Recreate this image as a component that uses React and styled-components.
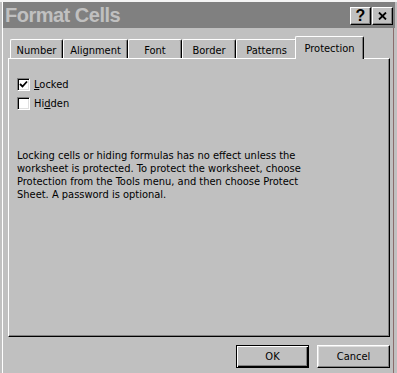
import React from "react";
import styled, { createGlobalStyle } from "styled-components";

const UI = `"DejaVu Sans Condensed", "DejaVu Sans", sans-serif`;

const Global = createGlobalStyle`
  html, body { margin: 0; padding: 0; background: #c0c0c0; }
  body { font-family: ${UI}; font-size: 11px; color: #000; }
  * { box-sizing: border-box; }
`;

const Frame = styled.div`
  width: 397px;
  height: 373px;
  background: #c0c0c0;
  border-top: 2px solid #f4f4f4;
  padding: 0 2px 0 3px;
  box-shadow: inset 2px 0 0 #c0c0c0, inset 3px 0 0 #ffffff,
    inset -3px 0 0 #c0c0c0, inset -4px 0 0 #8c6c6c;
  display: flex;
  flex-direction: column;
  overflow: hidden;
`;

const TitleBar = styled.div`
  height: 26px;
  background: #808080;
  display: flex;
  align-items: center;
  justify-content: space-between;
  padding: 0 2px 0 2px;
`;

const Title = styled.span`
  font-family: "Liberation Sans", Arial, sans-serif;
  font-weight: bold;
  font-size: 20px;
  color: #c0c0c0;
  letter-spacing: -0.5px;
  line-height: 26px;
`;

const Controls = styled.div`
  display: flex;
  gap: 1px;
  margin-top: 1px;
`;

const CtlButton = styled.div`
  width: 21px;
  height: 18px;
  background: #c0c0c0;
  border-top: 1px solid #ffffff;
  border-left: 1px solid #ffffff;
  border-right: 1px solid #000;
  border-bottom: 1px solid #000;
  box-shadow: inset -1px -1px 0 #808080;
  display: flex;
  align-items: center;
  justify-content: center;
  font-family: "Liberation Sans", Arial, sans-serif;
  font-weight: bold;
  font-size: 16px;
  line-height: 1;
  color: #000;
`;

const Body = styled.div`
  padding: 8px 0 0 5px;
  display: flex;
  flex-direction: column;
`;

const TabRow = styled.div`
  display: flex;
  align-items: flex-end;
  height: 22px;
  padding-left: 2px;
  position: relative;
  z-index: 1;
`;

const Tab = styled.div`
  width: ${(p) => p.$w + (p.$active ? 4 : 0)}px;
  height: ${(p) => (p.$active ? 23 : 19)}px;
  margin: ${(p) => (p.$active ? "0 -2px -1px -2px" : "0")};
  background: #c0c0c0;
  border-top: 1px solid #ffffff;
  border-left: 1px solid #ffffff;
  border-right: 1px solid #000;
  border-radius: 2px 2px 0 0;
  box-shadow: inset -1px 0 0 #808080;
  display: flex;
  align-items: center;
  justify-content: center;
  padding-top: ${(p) => (p.$active ? 0 : 2)}px;
  font-size: 11px;
  color: #000;
`;

const Panel = styled.div`
  width: 382px;
  height: 279px;
  border-top: 1px solid #ffffff;
  border-left: 1px solid #ffffff;
  border-right: 1px solid #000;
  border-bottom: 1px solid #000;
  box-shadow: inset -1px -1px 0 #808080;
  padding: 19px 8px 0 8px;
  display: flex;
  flex-direction: column;
`;

const CheckRow = styled.label`
  display: flex;
  align-items: center;
  gap: 4px;
  height: 13px;
  margin-bottom: 6px;
  font-size: 11px;
`;

const Box = styled.span`
  width: 13px;
  height: 13px;
  background: #fff;
  border-top: 1px solid #808080;
  border-left: 1px solid #808080;
  border-right: 1px solid #fff;
  border-bottom: 1px solid #fff;
  box-shadow: inset 1px 1px 0 #000, inset -1px -1px 0 #dfdfdf;
  display: flex;
  align-items: center;
  justify-content: center;
`;

const Note = styled.p`
  margin: 33px 0 0 0;
  font-size: 11px;
  line-height: 13px;
  width: 300px;
`;

const Footer = styled.div`
  display: flex;
  justify-content: flex-end;
  gap: 8px;
  padding: 8px 5px 0 0;
  width: 387px;
`;

const Button = styled.div`
  width: 73px;
  height: 23px;
  background: #c0c0c0;
  display: flex;
  align-items: center;
  justify-content: center;
  font-size: 11px;
  border-top: 1px solid ${(p) => (p.$default ? "#000" : "#fff")};
  border-left: 1px solid ${(p) => (p.$default ? "#000" : "#fff")};
  border-right: 1px solid #000;
  border-bottom: 1px solid #000;
  box-shadow: ${(p) =>
    p.$default
      ? "inset 1px 1px 0 #fff, inset -1px -1px 0 #000, inset -2px -2px 0 #808080"
      : "inset -1px -1px 0 #808080, inset 1px 1px 0 #dfdfdf"};
`;

const tabs = [
  ["Number", 53],
  ["Alignment", 65],
  ["Font", 54],
  ["Border", 54],
  ["Patterns", 61],
  ["Protection", 65, true],
];

export default function App() {
  return (
    <>
      <Global />
      <Frame>
        <TitleBar>
          <Title>Format Cells</Title>
          <Controls>
            <CtlButton>?</CtlButton>
            <CtlButton>
              <svg width="9" height="8" viewBox="0 0 9 8">
                <path d="M1 0.5 L8 7.5 M8 0.5 L1 7.5" stroke="#000" strokeWidth="1.8" />
              </svg>
            </CtlButton>
          </Controls>
        </TitleBar>
        <Body>
          <TabRow>
            {tabs.map(([label, w, active]) => (
              <Tab key={label} $w={w} $active={active}>
                {label}
              </Tab>
            ))}
          </TabRow>
          <Panel>
            <CheckRow>
              <Box>
                <svg width="9" height="9" viewBox="0 0 9 9">
                  <path d="M1 4 L3.5 6.5 L8 1.5" stroke="#000" strokeWidth="1.8" fill="none" />
                </svg>
              </Box>
              <span>
                <u>L</u>ocked
              </span>
            </CheckRow>
            <CheckRow>
              <Box />
              <span>
                Hi<u>d</u>den
              </span>
            </CheckRow>
            <Note>
              Locking cells or hiding formulas has no effect unless the worksheet is
              protected. To protect the worksheet, choose Protection from the Tools
              menu, and then choose Protect Sheet. A password is optional.
            </Note>
          </Panel>
          <Footer>
            <Button $default>OK</Button>
            <Button>Cancel</Button>
          </Footer>
        </Body>
      </Frame>
    </>
  );
}
